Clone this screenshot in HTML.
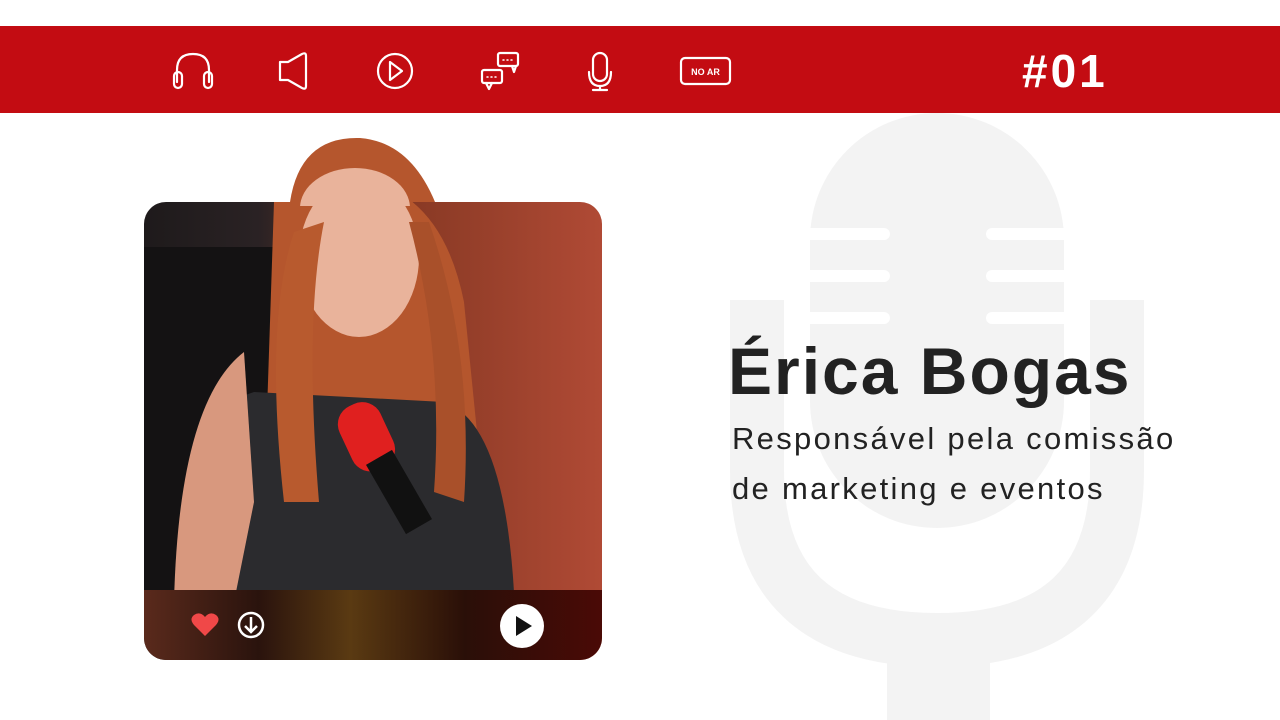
<!DOCTYPE html>
<html><head><meta charset="utf-8"><style>
html,body{margin:0;padding:0;width:1280px;height:720px;overflow:hidden;background:#fff;font-family:"Liberation Sans",sans-serif}
.bar{position:absolute;left:0;top:26px;width:1280px;height:87px;background:#c30c12}
.num{position:absolute;left:1022px;top:44px;color:#fff;font-weight:bold;font-size:46px;letter-spacing:3px}
.card{position:absolute;left:144px;top:202px;width:458px;height:458px;border-radius:22px;overflow:hidden;
background:linear-gradient(90deg,#1e1a1b 0%,#2a2224 25%,#8a3a25 60%,#b04a35 100%)}
.name{position:absolute;left:728px;top:333px;font-size:66px;font-weight:bold;color:#222;letter-spacing:2px}
.sub{position:absolute;left:732px;top:414px;font-size:31px;line-height:50px;color:#222;letter-spacing:2.3px}
</style></head><body>
<svg width="1280" height="720" style="position:absolute;left:0;top:0">
 <g fill="#f3f3f3" stroke="none">
  <rect x="810" y="113" width="254" height="415" rx="127"/>
 </g>
 <path d="M757 300 V470 Q757 640 937 640 Q1117 640 1117 470 V300" fill="none" stroke="#f3f3f3" stroke-width="54"/>
 <rect x="887" y="630" width="103" height="90" fill="#f3f3f3"/>
 <g stroke="#fff" stroke-width="12" stroke-linecap="round">
  <line x1="800" y1="234" x2="884" y2="234"/><line x1="992" y1="234" x2="1074" y2="234"/>
  <line x1="800" y1="276" x2="884" y2="276"/><line x1="992" y1="276" x2="1074" y2="276"/>
  <line x1="800" y1="318" x2="884" y2="318"/><line x1="992" y1="318" x2="1074" y2="318"/>
 </g>
</svg>
<div class="bar"></div>
<svg width="1280" height="113" style="position:absolute;left:0;top:0" fill="none" stroke="#fff" stroke-width="2.2" stroke-linecap="round" stroke-linejoin="round">
 <path d="M177 82 V70 Q177 54 193 54 Q209 54 209 70 V82"/>
 <rect x="174" y="72" width="8" height="16" rx="4"/><rect x="204" y="72" width="8" height="16" rx="4"/>
 <path d="M280 62 H288 L302 54 Q306 52 306 56 V86 Q306 90 302 88 L288 80 H280 Z"/>
 <circle cx="395" cy="71" r="17"/><path d="M390 62 L402 71 L390 80 Z"/>
 <rect x="482" y="70" width="20" height="13" rx="2"/><path d="M486 83 L489 89 L492 83"/>
 <rect x="498" y="53" width="20" height="13" rx="2"/><path d="M512 66 L514 72 L516 66"/>
 <g stroke-width="1.5"><path d="M487 77h1M491 77h1M495 77h1M503 60h1M507 60h1M511 60h1"/></g>
 <rect x="593" y="53" width="14" height="28" rx="7"/><path d="M589 72 Q589 86 600 86 Q611 86 611 72 M600 86 V90 M593 90 H607"/>
 <rect x="681" y="58" width="49" height="26" rx="4"/>
 <text x="705.5" y="75" fill="#fff" stroke="none" font-size="9" font-weight="bold" text-anchor="middle" font-family="Liberation Sans">NO AR</text>
</svg>
<div class="num">#01</div>
<div class="card">
 <svg width="458" height="458" style="position:absolute;left:0;top:0">
  <rect x="0" y="45" width="135" height="350" fill="#141213"/>
  <path d="M130 0 Q150 -40 230 -20 Q300 0 320 100 L340 300 L260 300 L120 300 Z" fill="#b5562d"/>
  <ellipse cx="215" cy="55" rx="60" ry="80" fill="#e9b39b"/>
  <path d="M40 390 Q40 210 110 190 L300 200 Q360 220 370 390 Z" fill="#2b2b2e"/>
  <path d="M150 30 Q120 120 140 300 L175 300 Q160 120 180 20 Z" fill="#b85a2e"/>
  <path d="M285 20 Q330 150 320 300 L290 290 Q300 150 265 20 Z" fill="#a9502a"/>
  <rect x="200" y="200" width="45" height="70" rx="20" fill="#e0201f" transform="rotate(-25 222 235)"/>
  <rect x="240" y="250" width="30" height="80" fill="#111" transform="rotate(-30 255 290)"/>
  <path d="M30 400 Q35 200 100 150 L110 300 L90 400 Z" fill="#d8987e"/>
 </svg>
 <div style="position:absolute;left:0;top:388px;width:458px;height:70px;background:linear-gradient(90deg,#5a2a1c,#2a130d 25%,#5a3a12 45%,#2a0f08 70%,#4a0a06)"></div>
 <svg width="458" height="70" style="position:absolute;left:0;top:388px">
  <path d="M61 46 L50 35 Q45 29 50 25 Q56 21 61 27 Q66 21 72 25 Q77 29 72 35 Z" fill="#f04848"/>
  <circle cx="107" cy="35" r="12" fill="none" stroke="#fff" stroke-width="2.5"/>
  <path d="M107 27 V42 M101 36 L107 42 L113 36" fill="none" stroke="#fff" stroke-width="2.5"/>
  <circle cx="378" cy="36" r="22" fill="#fff"/>
  <path d="M372 26 L388 36 L372 46 Z" fill="#111"/>
 </svg>
</div>
<svg width="200" height="70" style="position:absolute;left:260px;top:136px">
 <path d="M30 66 Q40 0 100 2 Q150 6 175 66 Z" fill="#b5562d"/>
 <ellipse cx="95" cy="72" rx="55" ry="40" fill="#e9b39b"/>
</svg>
<div class="name">Érica Bogas</div>
<div class="sub">Responsável pela comissão<br>de marketing e eventos</div>
</body></html>
